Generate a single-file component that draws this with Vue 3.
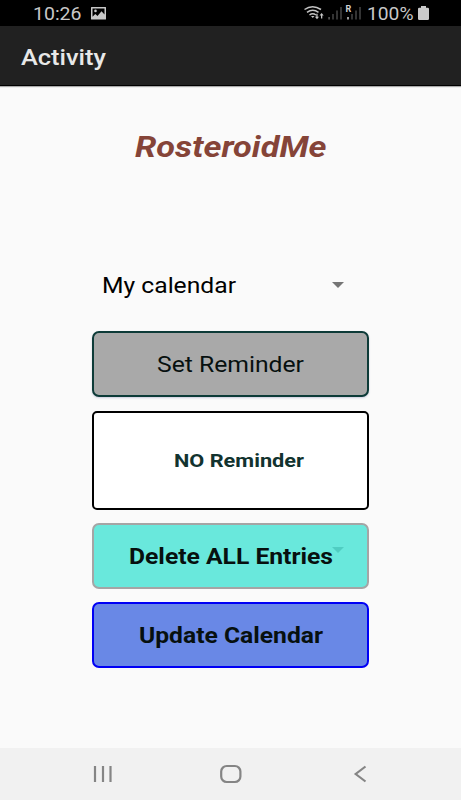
<script setup>
import { h } from 'vue'

// Text drawn at a fixed advance width, stretched horizontally like the device's wide font scale.
const WideText = (props) =>
  h('svg', { class: 'wide', width: props.w, height: props.size * 1.5 }, [
    h('text', {
      x: 0,
      y: props.size * 1.1,
      'font-size': props.size,
      textLength: props.w,
      lengthAdjust: 'spacingAndGlyphs',
      fill: 'currentColor'
    }, props.text)
  ])
WideText.props = ['text', 'w', 'size']
</script>

<template>
  <div class="screen">
    <header class="status">
      <WideText class="clock" text="10:26" :w="48.5" :size="18" />
      <svg class="photo" width="15" height="13" viewBox="0 0 15 13">
        <path fill="#c8c8c8" fill-rule="evenodd" d="M.5 0h14q.5 0 .5.5v11.500q0 .5-.5.5H.5q-.5 0-.5-.5V.5q0-.5.5-.5ZM1.500 1.500v8.300L4.300 7l2.200 2 4-4.800 3 3.300v-6ZM4.500 2.600a1.300 1.300 0 1 1 0 2.600 1.300 1.300 0 0 1 0-2.600Z" />
      </svg>
      <div class="signals">
        <svg width="58" height="18" viewBox="0 0 58 18">
          <g fill="none" stroke="#c4c4c4" stroke-width="1.500">
            <path d="M.5 7.500Q8.500 2 17 7.500M3 10.400Q8.700 6.300 14.500 10.400M5.500 13Q8.700 10.600 12 13" />
          </g>
          <path fill="#c4c4c4" d="M7 14h3.500L8.800 16ZM12.300 11.700h1.300v3h1.400l-2 2.500-2.100-2.500h1.400ZM18.300 16.500h-1.300v-3h-1.400l2-2.500 2.100 2.500h-1.400Z" />
          <g fill="#414141">
            <path d="M28.200 12h1.600V17.500h-1.600ZM32.200 8.500h1.600V17.500h-1.600ZM36.200 5h1.600V17.500h-1.600ZM47.200 12h1.600V17.500h-1.600ZM51.200 8.500h1.600V17.500h-1.600ZM55.200 5h1.600V17.500h-1.600Z" />
          </g>
          <path fill="#5a5a5a" d="M24.300 15h1.600v2.500h-1.600Z" />
          <path fill="#c4c4c4" d="M43.200 15h1.600v2.500h-1.600Z" />
          <text x="41.500" y="10" font-size="9" font-weight="700" fill="#d0d0d0">R</text>
        </svg>
      </div>
      <WideText class="percent" text="100%" :w="46.5" :size="18" />
      <svg class="battery" width="11" height="14" viewBox="0 0 11 14">
        <path fill="#cacaca" d="M3 0h5v1.700h1.800Q11 1.700 11 2.900v9.800Q11 14 9.700 14H1.300Q0 14 0 12.700V2.900Q0 1.700 1.200 1.700H3Z" />
      </svg>
    </header>
    <div class="appbar"><WideText text="Activity" :w="85" :size="22" /></div>
    <main>
      <h1><WideText text="RosteroidMe" :w="191.5" :size="29" /></h1>
      <div class="select">
        <WideText text="My calendar" :w="134" :size="21.5" />
        <i class="arrow"></i>
      </div>
      <button class="set"><WideText text="Set Reminder" :w="147" :size="22" /></button>
      <div class="note"><WideText text="NO Reminder" :w="130" :size="19" /></div>
      <button class="delete">
        <WideText text="Delete ALL Entries" :w="204" :size="21.5" />
        <i class="arrow faint"></i>
      </button>
      <button class="update"><WideText text="Update Calendar" :w="184" :size="21.5" /></button>
    </main>
    <nav>
      <svg width="20" height="18" viewBox="0 0 20 18"><path d="M2 1v16M10 1v16M17.500 1v16" /></svg>
      <svg class="home" width="22" height="18" viewBox="0 0 22 18"><rect x="1.200" y="1" width="19.200" height="16" rx="5.500" /></svg>
      <svg width="13" height="18" viewBox="0 0 13 18"><path d="M11.500 1.500L1.700 9l9.800 7.500" /></svg>
    </nav>
  </div>
</template>

<style>
body { margin: 0; }
</style>

<style scoped>
.screen {
  width: 461px;
  height: 800px;
  display: flex;
  flex-direction: column;
  background: #fafafa;
  font-family: Roboto, sans-serif;
  overflow: hidden;
}
svg { display: block; flex: none; overflow: visible; }
.status {
  box-sizing: border-box;
  height: 26px;
  flex: none;
  display: flex;
  align-items: flex-start;
  background: #000;
  color: #c8c8c8;
  padding-left: 33px;
}
.clock { margin-top: -0.5px; }
.photo { margin: 6.5px 0 0 9.5px; }
.signals { margin: 2px 0 0 198px; }
.percent { margin: -0.5px 0 0 5px; }
.battery { margin: 6px 0 0 4px; }
.appbar {
  box-sizing: border-box;
  height: 60px;
  flex: none;
  padding: 15px 0 0 21px;
  background: #212121;
  border-bottom: 1px solid #000;
  box-shadow: 0 1px 1px #aaa;
  color: #e8e8e8;
  font-weight: 500;
}
main {
  flex: 1;
  display: flex;
  flex-direction: column;
  align-items: center;
}
h1 {
  margin: 39px 0 0;
  height: 44px;
  color: #854438;
  font-weight: 700;
  font-style: italic;
}
.select {
  box-sizing: border-box;
  width: 277px;
  height: 32px;
  margin-top: 100px;
  padding: 0 25px 0 10px;
  display: flex;
  justify-content: space-between;
}
.arrow {
  flex: none;
  width: 12px;
  height: 6px;
  margin-top: 13px;
  background: #757575;
  clip-path: polygon(0 0, 100% 0, 50% 100%);
}
button, .note {
  box-sizing: border-box;
  width: 277px;
  height: 66px;
  flex: none;
  display: flex;
  align-items: center;
  justify-content: center;
  position: relative;
  padding: 0;
  border: 2px solid;
  border-radius: 7px;
  font-family: inherit;
  font-weight: 700;
}
.set {
  margin-top: 30px;
  background: #a9a9a9;
  border-color: #0d3b38;
  font-weight: 400;
  box-shadow: 0 1px 2px #ccd;
}
.set svg { margin-top: 1px; }
.set svg, .delete svg, .update svg { color: #07100f; }
.note {
  height: 99px;
  margin-top: 13.5px;
  padding-left: 16px;
  background: #fff;
  border-color: #000;
  border-radius: 5px;
  color: #12332f;
}
.delete {
  margin-top: 13.5px;
  background: #69e8dc;
  border-color: #a5a5a5;
}
.faint {
  position: absolute;
  top: 22px;
  right: 23px;
  margin: 0;
  background: #50cdc2;
}
.update {
  margin-top: 13px;
  background: #6988e6;
  border-color: #0000f5;
}
.update svg { margin-top: 1px; }
nav {
  height: 52px;
  flex: none;
  display: flex;
  justify-content: space-between;
  align-items: center;
  box-sizing: border-box;
  padding: 0 94px 0 92.5px;
  background: #f1f1f1;
}
.home { margin-right: 4px; }
nav path, nav rect { fill: none; stroke: #858585; stroke-width: 2.2; }
</style>
